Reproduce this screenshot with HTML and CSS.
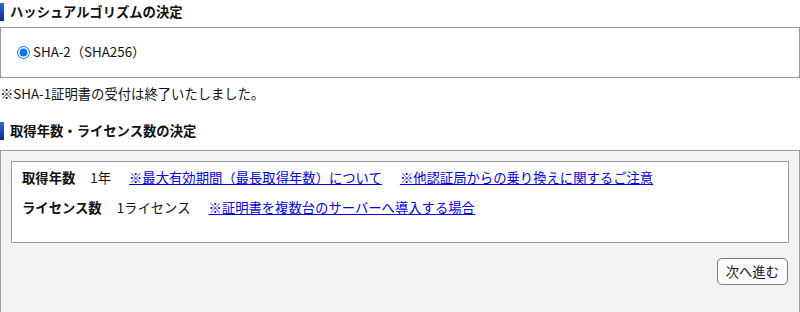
FILE: index.html
```html
<!DOCTYPE html>
<html lang="ja">
<head>
<meta charset="utf-8">
<title>決定</title>
<link rel="stylesheet" href="styles.css">
</head>
<body>
<h2 class="sec-title">ハッシュアルゴリズムの決定</h2>
<div class="hash-box">
  <label class="radio-label"><input type="radio" name="hash" checked>SHA-2（SHA256）</label>
</div>
<p class="note">※SHA-1証明書の受付は終了いたしました。</p>

<h2 class="sec-title sec-title-2">取得年数・ライセンス数の決定</h2>
<div class="outer-box">
  <div class="inner-box">
    <div class="row">
      <span class="label">取得年数</span><span class="value">1年</span><a class="link" href="#">※最大有効期間（最長取得年数）について</a><a class="link" href="#">※他認証局からの乗り換えに関するご注意</a>
    </div>
    <div class="row">
      <span class="label">ライセンス数</span><span class="value">1ライセンス</span><a class="link" href="#">※証明書を複数台のサーバーへ導入する場合</a>
    </div>
  </div>
  <div class="actions">
    <button class="next-btn" type="button">次へ進む</button>
  </div>
</div>
</body>
</html>
```

FILE: styles.css
```css
html, body {
  margin: 0;
  padding: 0;
  background: #ffffff;
}
body {
  font-family: "Noto Sans CJK JP", "Noto Sans", sans-serif;
  font-size: 13.33px;
  line-height: 20px;
  color: #111;
  width: 800px;
}
.sec-title {
  position: relative;
  margin: 2px 0 0 0;
  padding-left: 10px;
  font-size: 13.33px;
  line-height: 20px;
  font-weight: bold;
  color: #111;
}
.sec-title::before {
  content: "";
  position: absolute;
  left: 0;
  top: 1px;
  width: 4px;
  height: 18px;
  background: linear-gradient(to bottom, #2d6ad6, #0c2a8c);
}
.sec-title-2 {
  margin-top: 17px;
}
.hash-box {
  margin-top: 5px;
  border: 1px solid #9a9a9a;
  padding: 14px 10px 15px 11px;
}
.radio-label {
  display: flex;
  align-items: center;
}
.radio-label input {
  margin: 0 3px 0 5px;
  width: 13px;
  height: 13px;
}
.note {
  margin: 6px 0 0 0;
}
.outer-box {
  margin-top: 9px;
  border: 1px solid #9a9a9a;
  background: #f2f2f2;
  padding: 10px 10px 27px 10px;
}
.inner-box {
  background: #ffffff;
  border: 1px solid #9a9a9a;
  padding: 6px 10px 24px 10px;
  display: flex;
  flex-direction: column;
  gap: 10px;
}
.row {
  display: flex;
  white-space: nowrap;
}
.label {
  font-weight: bold;
}
.value {
  margin-left: 15px;
}
.link {
  margin-left: 18px;
  color: #0000ee;
  text-decoration: underline;
}
.actions {
  display: flex;
  justify-content: flex-end;
  margin-top: 15px;
}
.next-btn {
  font-family: inherit;
  font-size: 13.33px;
  height: 27px;
  padding: 0 8px;
  margin-right: 1px;
  color: #111;
  background: #fbfbfb;
  border: 1px solid #7a7a7a;
  border-radius: 5px;
}
```
